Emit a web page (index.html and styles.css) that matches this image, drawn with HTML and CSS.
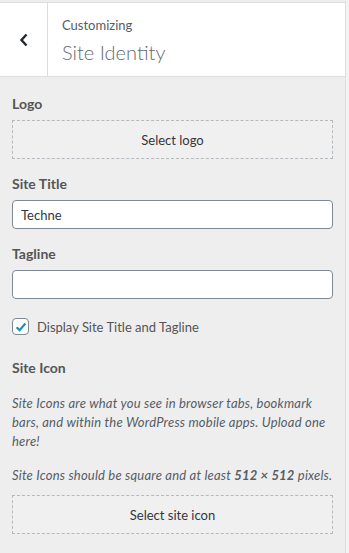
FILE: index.html
```html
<!DOCTYPE html>
<html lang="en">
<head>
  <meta charset="UTF-8" />
  <title>Customizing Site Identity</title>
  <link rel="stylesheet" href="styles.css">
</head>
<body>
  <div class="panel">
    <!-- Section header -->
    <div class="section-head">
      <button class="back" aria-label="Back">
        <svg width="10" height="14" viewBox="0 0 10 14"><path d="M7.5 1.5 L2.5 7 L7.5 12.5" fill="none" stroke="#23282d" stroke-width="2.4"/></svg>
      </button>
      <div class="head-title">
        <span class="action">Customizing</span>
        <h2>Site Identity</h2>
      </div>
    </div>

    <div class="controls">
      <div class="control">
        <span class="control-title">Logo</span>
        <button class="placeholder">Select logo</button>
      </div>

      <div class="control">
        <label class="control-title">Site Title</label>
        <input type="text" value="Techne">
      </div>

      <div class="control">
        <label class="control-title">Tagline</label>
        <input type="text" value="">
      </div>

      <div class="control check-row">
        <span class="checkbox">
          <svg width="14" height="14" viewBox="0 0 14 14"><path d="M2.6 7.2 L5.6 10.2 L11.4 3.6" fill="none" stroke="#1e8cbe" stroke-width="2.2"/></svg>
        </span>
        <span>Display Site Title and Tagline</span>
      </div>

      <div class="control">
        <span class="control-title">Site Icon</span>
        <p class="description first">Site Icons are what you see in browser tabs, bookmark bars, and within the WordPress mobile apps. Upload one here!</p>
        <p class="description last">Site Icons should be square and at least <strong>512 &times; 512</strong> pixels.</p>
        <button class="placeholder">Select site icon</button>
      </div>
    </div>
  </div>
</body>
</html>
```

FILE: styles.css
```css
* {
  margin: 0;
  padding: 0;
  box-sizing: border-box;
}

body {
  background: #f3f3f3;
  font-family: 'Lato', sans-serif;
  color: #444;
  width: 349px;
  height: 553px;
  overflow: hidden;
}

.panel {
  width: 346px;
  height: 553px;
  background: #eee;
  border-right: 1px solid #ddd;
  border-top: 2px solid #eee;
}

.section-head {
  display: flex;
  height: 75px;
  background: #fff;
  border-top: 1px solid #ddd;
  border-bottom: 1px solid #ddd;
}

.back {
  width: 48px;
  border: none;
  border-right: 1px solid #ddd;
  background: #fff;
  display: flex;
  align-items: center;
  justify-content: center;
}

.head-title {
  padding: 12px 0 0 14px;
}

.action {
  display: block;
  font-size: 13px;
  color: #555d66;
  line-height: 20px;
}

.head-title h2 {
  font-size: 20px;
  font-weight: 300;
  color: #656a70;
  line-height: 30px;
  margin-top: 2px;
}

.controls {
  padding: 17px 12px 0 12px;
}

.control {
  margin-bottom: 15px;
}

.control-title {
  display: block;
  font-size: 14px;
  font-weight: 700;
  color: #555;
  line-height: 20px;
  margin-bottom: 6px;
}

.placeholder {
  display: block;
  width: 100%;
  height: 39px;
  border: 1px dashed #b4b9be;
  background: #f0f0f1;
  font-family: inherit;
  font-size: 13px;
  color: #32373c;
}

input {
  display: block;
  width: 100%;
  height: 29px;
  border: 1px solid #7e8993;
  border-radius: 4px;
  background: #fff;
  padding: 0 8px;
  font-family: inherit;
  font-size: 13px;
  color: #32373c;
}

.check-row {
  display: flex;
  align-items: center;
  gap: 8px;
  font-size: 13px;
  color: #555;
  margin-top: 19px;
  margin-bottom: 23px;
}

.checkbox {
  width: 17px;
  height: 17px;
  border: 1px solid #7e8993;
  border-radius: 4px;
  background: #fff;
  display: flex;
  align-items: center;
  justify-content: center;
}

.description {
  font-size: 13px;
  font-style: italic;
  letter-spacing: 0.2px;
  color: #555d66;
  line-height: 19px;
  margin-bottom: 15px;
}

.description.first {
  margin-top: 16px;
}

.description.last {
  margin-bottom: 10px;
}

.description strong {
  font-weight: 700;
}
```
